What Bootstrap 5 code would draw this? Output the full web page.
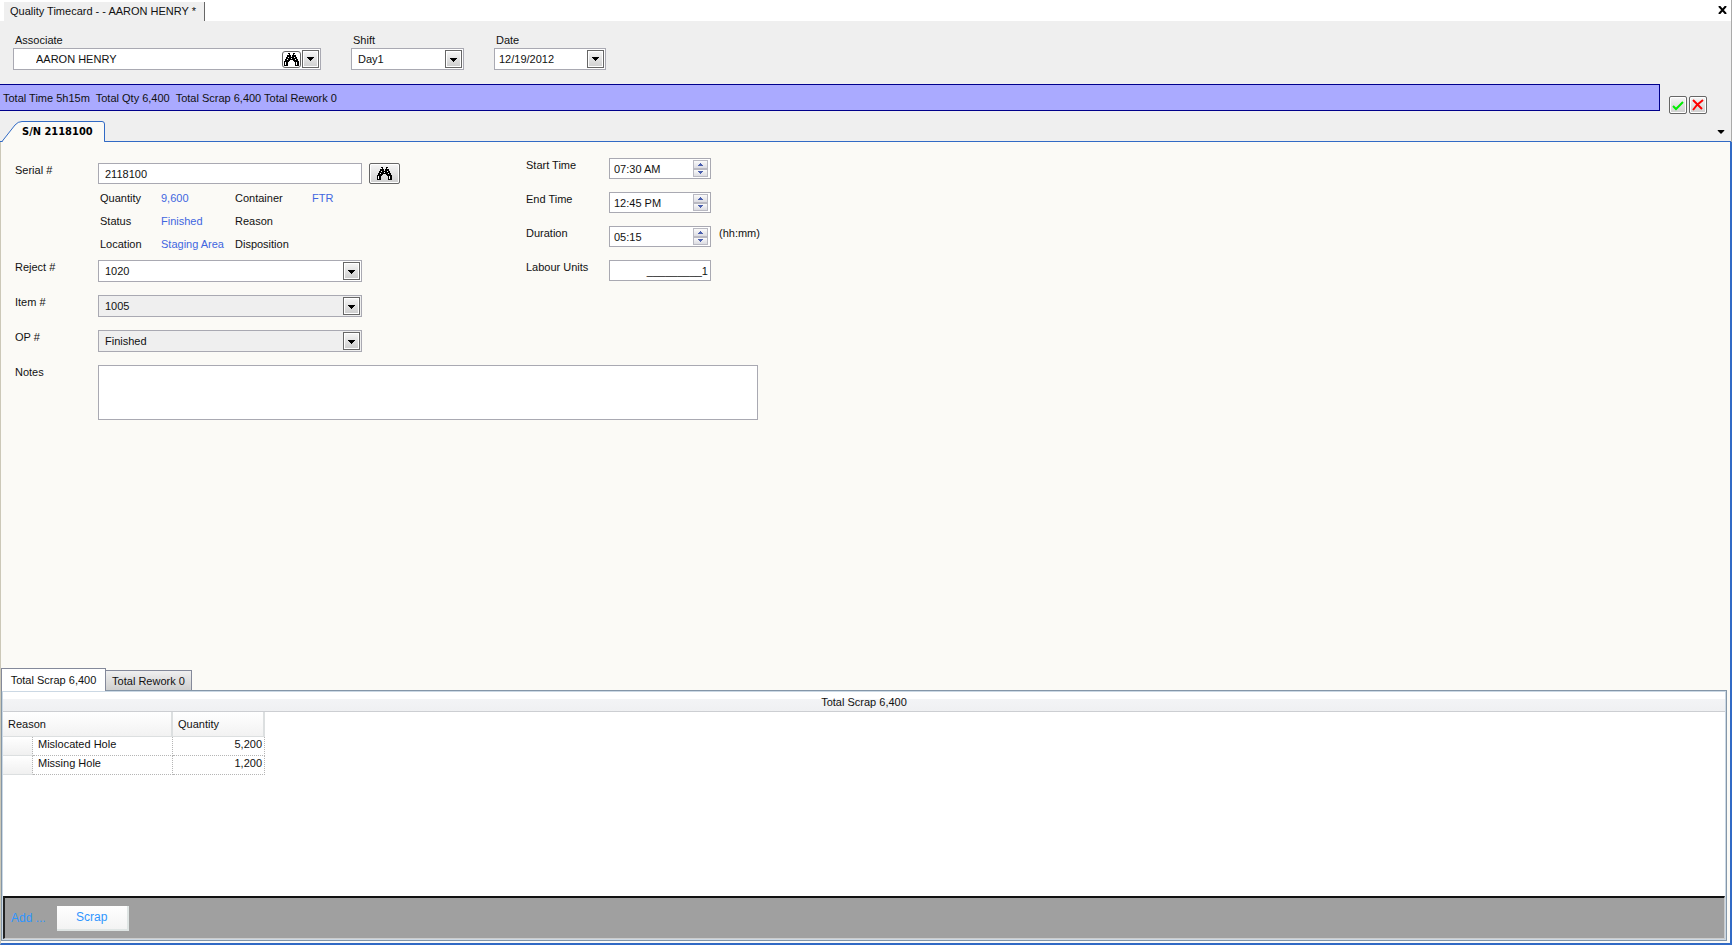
<!DOCTYPE html>
<html lang="en">
<head>
<meta charset="utf-8">
<meta name="viewport" content="width=device-width, initial-scale=1">
<title>Quality Timecard</title>
<link href="https://cdn.jsdelivr.net/npm/bootstrap@5.3.0/dist/css/bootstrap.min.css" rel="stylesheet">
<style>
body{font-family:"Liberation Sans",Arial,sans-serif;font-size:11px;line-height:14px;color:#111;background:#efefef}
button,input,select,textarea{font-size:11px;line-height:14px;color:#111}
.titlebar{background:#fff;height:21px;padding:2px 3px 0 4px}
.doc-tab{background:#efefef;border-right:1px solid #666;height:19px;padding:2px 8px 0 6px}
.close-btn{padding:0;border:0;background:none;width:12px;height:15px;line-height:0}
.app-head{border-right:1px solid #aaa}
.filters{padding:12px 13px 14px 13px;gap:30px}
.filters label{padding-left:2px;height:15px}
.field{border:1px solid #a9a9b2;background:#fff;border-radius:0;height:22px;padding:0 2px 0 6px}
.field input{border:0;background:none;outline:0;padding:0;min-width:0;width:100%}
.plain{height:21px}
select.field{appearance:none;width:100%;padding-right:22px;background:#fff url("data:image/svg+xml,%3Csvg xmlns='http://www.w3.org/2000/svg' width='17' height='18'%3E%3Cdefs%3E%3ClinearGradient id='g' x2='0' y2='1'%3E%3Cstop stop-color='%23f4f4f4'/%3E%3Cstop offset='1' stop-color='%23cfcfcf'/%3E%3C/linearGradient%3E%3C/defs%3E%3Crect x='.5' y='.5' width='16' height='17' fill='%23fff' stroke='%23666'/%3E%3Cpath fill='url(%23g)' d='M2 2h13v14H2z'/%3E%3Cpath d='M5 8h7v1h-1v1h-1v1H9v1H8v-1H7v-1H6V9H5z'/%3E%3C/svg%3E") no-repeat right 1px center}
select.field.dim{background-color:#efefef}
.btn-mini{border:1px solid #666;background:linear-gradient(#f6f6f6,#cfcfcf);box-shadow:inset 0 0 0 1px #fff;padding:0;display:flex;align-items:center;justify-content:center;flex:none}
.drop{width:17px;height:18px}
.lookup{width:19px;height:17px;border-radius:3px;margin-right:1px;background:#fff}
.field .drop{margin-right:-1px}
.w-assoc{width:308px}.w-shift{width:113px}.w-date{width:112px}
.field.date-field{padding-left:4px}
.totals{background:#aaaaff;border:1px solid #00008b;border-left:0;height:27px;padding:6px 3px;white-space:pre}
.ok-btns{width:71px;padding:12px 0 0 9px;gap:2px}
.ok-btns .btn-mini{width:18px;height:18px;border-radius:2px}
.sn-strip{height:31px;border-bottom:1px solid #316ac5;margin-top:0}
.sn-strip{height:28px}
.sn-tab{border:0;padding:0 0 0 22px;background:none;width:105px;height:21px;margin-bottom:-1px;position:relative;font:bold 11px/14px "DejaVu Sans Condensed","DejaVu Sans",sans-serif;color:#000}
.sn-tab svg{position:absolute;left:0;top:0}
.sn-tab span{position:relative}
.tab-list{border:0;padding:0;background:none;width:12px;height:18px;line-height:0;margin-right:4px}
.work{background:#fbfaf6;border:1px solid #ccc8b8;border-width:0 2px 2px 1px;border-right-color:#316ac5;border-bottom-color:#316ac5}
.entry{padding:16px 12px 12px 14px}
.cols{display:grid;grid-template-columns:511px 1fr}
.name{width:83px;flex:none}
.w-main{width:264px}
.serial-row{padding-top:5px}
.details{padding:7px 0 9px 85px;display:grid;grid-template-columns:61px 74px 77px 90px;row-gap:9px}
.details dt,.details dd{margin:0;font-weight:400;line-height:14px}
.details dd{color:#4166e0}
.find{width:31px;height:21px;border-radius:2px;margin-left:7px}
.form-row{margin-bottom:13px}
.notes{width:660px;height:55px;border:1px solid #a9a9b2;background:#fff;resize:none}
.times .plain{width:102px;padding:0 2px 0 4px}
.spin{width:15px;height:17px;flex:none}
.spin button{border:1px solid #b9b9c2;background:linear-gradient(#fafafa,#dcdce2);padding:0;height:50%;line-height:0;display:flex;align-items:center;justify-content:center}
.lower{flex:0 0 275px;padding:0 3px 2px 0}
.tab-a{border:1px solid #84899a;border-bottom:0;background:#fff;height:23px;width:105px;padding:0;margin-bottom:-1px;position:relative}
.tab-b{border:1px solid #84899a;border-left:0;border-bottom:0;background:linear-gradient(#efefef,#cfcfcf);height:20px;width:86px;padding:0}
.sheet{background:#fff;border:1px solid #8496a8;box-shadow:inset 0 0 0 1px #cbd8e4;padding:1px}
.sheet-cap{height:20px;line-height:21px;border-bottom:1px solid #ccced2;background:linear-gradient(#fff 35%,#f3f4f6 36%,#eff0f2)}
.grid-tbl{width:262px;table-layout:fixed;border-collapse:separate;border-spacing:0}
.grid-tbl th{font-weight:400;height:25px;padding:0 5px;background:linear-gradient(#fff,#f2f2f2);border-right:2px solid #dcdfe0;border-bottom:1px solid #dcdfe0}
.grid-tbl td{height:19px;padding:0 2px 4px 5px;border-right:1px dotted #b5b5b5;border-bottom:1px dotted #b5b5b5;line-height:14px}
.grid-tbl td:first-child{background:linear-gradient(#fff,#f0f0f0);border-bottom:1px solid #dcdfe0}
.foot{background:#a0a0a0;border:1px solid #ccc;border-top:2px solid #111;border-left:2px solid #222;height:43px;padding:0 6px;font-size:12px;color:#2f96ff}
.scrap-btn{width:72px;height:25px;border:0;border-right:2px solid #dfe5e4;border-bottom:2px solid #dfe5e4;background:linear-gradient(#fff,#f3f3f3);font-size:12px;color:#2f96ff;margin-left:11px}
</style>
</head>
<body class="d-flex flex-column min-vh-100">
<svg width="0" height="0" class="position-absolute" aria-hidden="true">
  <symbol id="bino" viewBox="0 0 15 13"><path d="M4 0h2v2h1v2h1V2h1V0h2v2h1v2h1v2h1v2h1v5h-4V9h-1V8H9V7H6v1H5v1H4v4H0V8h1V6h1V4h1V2h1z"/><path fill="#fff" d="M4 1h1v1H4zM10 1h1v1h-1zM4 4h1v1H4zM10 4h1v1h-1zM3 6h1v1H3zM11 6h1v1h-1zM7 5h1v1H7zM1 9h1v3H1zM12 9h1v3h-1z"/></symbol>
  <symbol id="down" viewBox="0 0 7 4"><path d="M0 0h7v1H6v1H5v1H4v1H3V3H2V2H1V1H0z"/></symbol>
  <symbol id="tri-up" viewBox="0 0 5 3"><path fill="#4a5fae" d="M2 0h1v1h1v1h1v1H0V2h1V1h1z"/></symbol>
  <symbol id="tri-dn" viewBox="0 0 5 3"><path fill="#4a5fae" d="M0 0h5v1H4v1H3v1H2V2H1V1H0z"/></symbol>
</svg>
<header class="app-head">
  <div class="titlebar d-flex justify-content-between">
    <div class="doc-tab">Quality Timecard - - AARON HENRY *</div>
    <button class="close-btn" aria-label="Close"><svg width="9" height="8" viewBox="0 0 9 8"><path d="M1 0l7 8M8 0L1 8" stroke="#000" stroke-width="2"/></svg></button>
  </div>
  <div class="filters d-flex">
    <div class="w-assoc">
      <label for="assoc" class="d-block">Associate</label>
      <div class="field d-flex align-items-center">
        <input id="assoc" class="ps-3" value="AARON HENRY">
        <button class="btn-mini lookup" aria-label="Find associate"><svg width="15" height="13"><use href="#bino"/></svg></button>
        <button class="btn-mini drop" aria-label="Open list"><svg width="7" height="4"><use href="#down"/></svg></button>
      </div>
    </div>
    <div class="w-shift">
      <label for="shift" class="d-block">Shift</label>
      <select id="shift" class="field"><option>Day1</option></select>
    </div>
    <div class="w-date">
      <label for="date" class="d-block">Date</label>
      <div class="field date-field d-flex align-items-center">
        <input id="date" value="12/19/2012">
        <button class="btn-mini drop" aria-label="Open calendar"><svg width="7" height="4"><use href="#down"/></svg></button>
      </div>
    </div>
  </div>
  <div class="d-flex">
    <div class="totals flex-grow-1">Total Time 5h15m  Total Qty 6,400  Total Scrap 6,400 Total Rework 0</div>
    <div class="ok-btns d-flex">
      <button class="btn-mini" aria-label="Accept"><svg width="12" height="11" viewBox="0 0 12 11"><path d="M1 6l3 3 7-7" fill="none" stroke="#0e0" stroke-width="2"/></svg></button>
      <button class="btn-mini" aria-label="Cancel"><svg width="12" height="12" viewBox="0 0 12 12"><path d="M1 1l9 9M11 1L5 6l-4 5" fill="none" stroke="#f00" stroke-width="2"/></svg></button>
    </div>
  </div>
  <div class="sn-strip d-flex align-items-end justify-content-between">
    <button class="sn-tab text-start"><svg width="105" height="21" viewBox="0 0 105 21"><path d="M0 20.500H2L15 4Q18 .5 22 .5H102Q104.500 .5 104.500 3V20.500" fill="#fbfaf6" stroke="#316ac5"/><path d="M3 20.500H104" stroke="#fbfaf6"/></svg><span>S/N 2118100</span></button>
    <button class="tab-list" aria-label="Tab list"><svg width="8" height="4" viewBox="0 0 7 4"><use href="#down"/></svg></button>
  </div>
</header>
<main class="work d-flex flex-column flex-grow-1">
  <form class="entry flex-grow-1">
    <div class="cols">
      <div>
        <div class="d-flex serial-row">
          <label class="name" for="serial">Serial #</label>
          <input id="serial" class="field plain w-main" value="2118100">
          <button type="button" class="btn-mini find" aria-label="Find serial"><svg width="15" height="13"><use href="#bino"/></svg></button>
        </div>
        <dl class="details mb-0">
          <dt>Quantity</dt><dd>9,600</dd><dt>Container</dt><dd>FTR</dd>
          <dt>Status</dt><dd>Finished</dd><dt>Reason</dt><dd></dd>
          <dt>Location</dt><dd>Staging Area</dd><dt>Disposition</dt><dd></dd>
        </dl>
        <div class="d-flex form-row"><label class="name" for="reject">Reject #</label><div class="w-main"><select id="reject" class="field d-block"><option>1020</option></select></div></div>
        <div class="d-flex form-row"><label class="name" for="item">Item #</label><div class="w-main"><select id="item" class="field dim d-block"><option>1005</option></select></div></div>
        <div class="d-flex form-row"><label class="name" for="op">OP #</label><div class="w-main"><select id="op" class="field dim d-block"><option>Finished</option></select></div></div>
      </div>
      <div class="times">
        <div class="d-flex form-row"><label class="name" for="start">Start Time</label><div class="field plain d-flex align-items-center"><input id="start" value="07:30 AM"><div class="spin"><button type="button" class="w-100" aria-label="Up"><svg width="5" height="3"><use href="#tri-up"/></svg></button><button type="button" class="w-100" aria-label="Down"><svg width="5" height="3"><use href="#tri-dn"/></svg></button></div></div></div>
        <div class="d-flex form-row"><label class="name" for="end">End Time</label><div class="field plain d-flex align-items-center"><input id="end" value="12:45 PM"><div class="spin"><button type="button" class="w-100" aria-label="Up"><svg width="5" height="3"><use href="#tri-up"/></svg></button><button type="button" class="w-100" aria-label="Down"><svg width="5" height="3"><use href="#tri-dn"/></svg></button></div></div></div>
        <div class="d-flex form-row"><label class="name" for="dur">Duration</label><div class="field plain d-flex align-items-center"><input id="dur" value="05:15"><div class="spin"><button type="button" class="w-100" aria-label="Up"><svg width="5" height="3"><use href="#tri-up"/></svg></button><button type="button" class="w-100" aria-label="Down"><svg width="5" height="3"><use href="#tri-dn"/></svg></button></div></div><span class="ms-2">(hh:mm)</span></div>
        <div class="d-flex form-row"><label class="name" for="units">Labour Units</label><input id="units" class="field plain text-end" value="_________1"></div>
      </div>
    </div>
    <div class="d-flex"><label class="name" for="notes">Notes</label><textarea id="notes" class="notes"></textarea></div>
  </form>
  <section class="lower d-flex flex-column">
    <div class="d-flex align-items-end"><button class="tab-a">Total Scrap 6,400</button><button class="tab-b">Total Rework 0</button></div>
    <div class="sheet flex-grow-1 d-flex flex-column">
      <div class="sheet-cap text-center">Total Scrap 6,400</div>
      <div class="flex-grow-1">
        <table class="grid-tbl">
          <colgroup><col style="width:30px"><col style="width:140px"><col style="width:92px"></colgroup>
          <thead><tr><th colspan="2">Reason</th><th>Quantity</th></tr></thead>
          <tbody><tr><td></td><td>Mislocated Hole</td><td class="text-end">5,200</td></tr><tr><td></td><td>Missing Hole</td><td class="text-end">1,200</td></tr></tbody>
        </table>
      </div>
      <div class="foot d-flex align-items-center"><span>Add ...</span><button class="scrap-btn">Scrap</button></div>
    </div>
  </section>
</main>
<script src="https://cdn.jsdelivr.net/npm/bootstrap@5.3.0/dist/js/bootstrap.bundle.min.js"></script>
</body>
</html>
